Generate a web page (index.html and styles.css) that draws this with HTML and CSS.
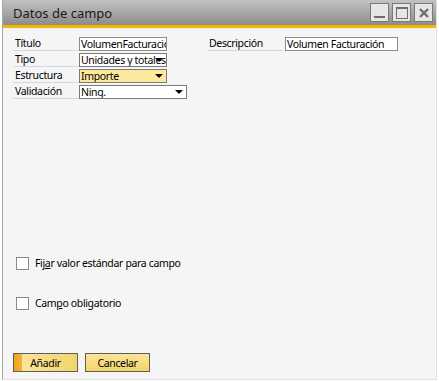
FILE: index.html
```html
<!DOCTYPE html>
<html>
<head>
    <title>Datos de campo</title>
    <meta charset="utf-8">
    <link rel="stylesheet" href="styles.css">
</head>
<body>
    <div class="window">
        <div class="titlebar">
            <span class="title">Datos de campo</span>
            <div class="wbuttons">
                <div class="wbtn"><span class="min"></span></div>
                <div class="wbtn"><span class="max"></span></div>
                <div class="wbtn">
                    <svg width="12" height="12" viewBox="0 0 12 12"><path d="M2 2 L10 10 M10 2 L2 10" stroke="#6e6e6e" stroke-width="2.4"/></svg>
                </div>
            </div>
        </div>
        <div class="content">
            <div class="form">
                <div class="col">
                    <div class="row">
                        <span class="label">Título</span>
                        <div class="field">VolumenFacturació</div>
                    </div>
                    <div class="row">
                        <span class="label">Tipo</span>
                        <div class="field combo">Unidades y totales<span class="arrow"></span></div>
                    </div>
                    <div class="row">
                        <span class="label">Estructura</span>
                        <div class="field combo active">Importe<span class="arrow"></span></div>
                    </div>
                    <div class="row">
                        <span class="label">Validación</span>
                        <div class="field combo wide">Ning.<span class="arrow"></span></div>
                    </div>
                </div>
                <div class="col">
                    <div class="row">
                        <span class="label label-wide">Descripción</span>
                        <div class="field desc">Volumen Facturación</div>
                    </div>
                </div>
            </div>

            <label class="check"><span class="box"></span><span>Fij<u>a</u>r valor estándar para campo</span></label>
            <label class="check check-second"><span class="box"></span><span>Cam<u>p</u>o obligatorio</span></label>

            <div class="actions">
                <button class="btn btn-primary">Añadir</button>
                <button class="btn">Cancelar</button>
            </div>
        </div>
    </div>
</body>
</html>
```

FILE: styles.css
```css
body {
    margin: 0;
    background-color: #fff;
    font-family: "Noto Sans", "Open Sans", sans-serif;
    font-size: 10.5px;
    letter-spacing: -0.35px;
    color: #000;
}

.window {
    width: 433px;
    height: 379px;
    margin-left: 2px;
    border-left: 1px solid #a9a9a9;
    border-right: 1px solid #e2e2e2;
    border-bottom: 1px solid #e2e2e2;
    background-color: #f5f5f5;
}

.titlebar {
    height: 25px;
    display: flex;
    align-items: center;
    justify-content: space-between;
    background: linear-gradient(#c2c2c2, #8c8c8c);
    border-bottom: 3px solid #f7b500;
}

.title {
    padding-left: 10px;
    font-size: 13px;
    letter-spacing: 0;
    color: #1a1a1a;
}

.wbuttons {
    display: flex;
    gap: 3px;
    padding-right: 3px;
}

.wbtn {
    width: 17px;
    height: 17px;
    border: 1px solid #7a7a7a;
    background-color: #e6e6e6;
    display: flex;
    align-items: center;
    justify-content: center;
    position: relative;
}

.min {
    position: absolute;
    left: 3px;
    bottom: 3px;
    width: 11px;
    height: 2px;
    background-color: #6e6e6e;
}

.max {
    width: 10px;
    height: 9px;
    border: 1px solid #6e6e6e;
    border-top-width: 2px;
}

.content {
    padding: 9px 10px 0 10px;
}

.form {
    display: flex;
    gap: 20px;
    height: 219px;
}

.col {
    display: flex;
    flex-direction: column;
    gap: 2px;
}

.row {
    display: flex;
    align-items: center;
    height: 14px;
}

.label {
    width: 66px;
    height: 14px;
    line-height: 13px;
    padding-left: 2px;
    border-bottom: 1px solid #d0dae6;
    box-sizing: border-box;
}

.label-wide {
    width: 76px;
    margin-right: 2px;
}

.field {
    width: 88px;
    height: 14px;
    box-sizing: border-box;
    border: 1px solid #8c8c8c;
    background-color: #fff;
    line-height: 12px;
    padding-left: 1px;
    white-space: nowrap;
    overflow: hidden;
    position: relative;
}

.combo {
    border-color: #7a7a7a;
}

.active {
    background-color: #fce99e;
}

.wide {
    width: 108px;
}

.desc {
    width: 113px;
}

.arrow {
    position: absolute;
    right: 3px;
    top: 4px;
    width: 0;
    height: 0;
    border-left: 4px solid transparent;
    border-right: 4px solid transparent;
    border-top: 4px solid #000;
}

.check {
    display: flex;
    align-items: center;
    gap: 6px;
    height: 14px;
    margin-left: 3px;
}

.check-second {
    margin-top: 26px;
}

.box {
    width: 11px;
    height: 11px;
    border: 1px solid #8a8a8a;
    background-color: #fff;
}

.actions {
    display: flex;
    gap: 7px;
    margin-top: 43px;
}

.btn {
    width: 65px;
    height: 19px;
    padding: 0;
    font-family: inherit;
    font-size: 10.5px;
    letter-spacing: -0.35px;
    color: #000;
    border: 1px solid #5e5e5e;
    background: linear-gradient(#fbe49a, #f3d46b);
}

.btn-primary {
    background: linear-gradient(to right, #f0a21c 0, #f5b33a 8px, #fbe49a 8px, #f3d46b 100%);
}
```
